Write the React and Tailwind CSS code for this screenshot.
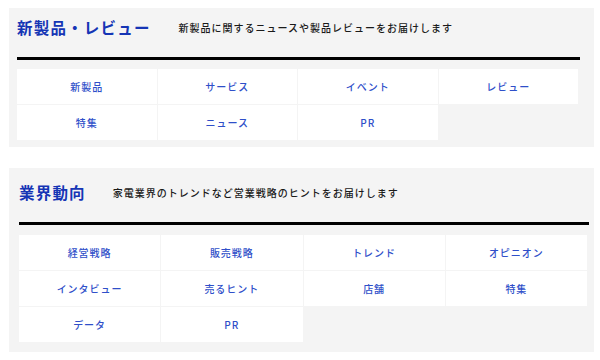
const font = { fontFamily: '"Noto Sans CJK JP", "Noto Sans", sans-serif' };

const sections = [
  {
    title: '新製品・レビュー',
    desc: '新製品に関するニュースや製品レビューをお届けします',
    links: ['新製品', 'サービス', 'イベント', 'レビュー', '特集', 'ニュース', 'PR'],
    pad: 'pl-2 pt-[10px] pb-[7px]',
    lineW: 'w-[563px]',
    gridW: 'w-[561px]',
    lineGap: 'mt-[21px]',
    gridGap: 'mt-[9px]',
    descGap: 'ml-[28px]',
  },
  {
    title: '業界動向',
    desc: '家電業界のトレンドなど営業戦略のヒントをお届けします',
    links: ['経営戦略', '販売戦略', 'トレンド', 'オピニオン', 'インタビュー', '売るヒント', '店舗', '特集', 'データ', 'PR'],
    pad: 'pl-[10px] pt-[15px] pb-[10px]',
    lineW: 'w-[570px]',
    gridW: 'w-[568px]',
    lineGap: 'mt-[21px]',
    gridGap: 'mt-[10px]',
    descGap: 'ml-[27px]',
  },
];

const Section = ({ s }) => (
  <div className={`bg-[#f4f4f4] ${s.pad}`}>
    {/* Header */}
    <div className="flex items-center h-[18px]">
      <h2 className="text-[15.5px] leading-[18px] font-bold tracking-[1.2px] text-[#1535b5]">{s.title}</h2>
      <p className={`${s.descGap} text-[10px] font-medium tracking-[1px] text-[#1a1a1a]`}>{s.desc}</p>
    </div>

    <div className={`${s.lineGap} h-[3px] bg-black ${s.lineW}`} />

    {/* Category links */}
    <div className={`${s.gridGap} grid grid-cols-4 gap-px ${s.gridW}`}>
      {s.links.map((l, i) => (
        <div key={i} className="h-[35px] bg-white flex items-center justify-center text-[10px] font-medium tracking-[1px] text-[#2f4fc9]">
          {l}
        </div>
      ))}
    </div>
  </div>
);

export default function App() {
  return (
    <div className="w-[600px] h-[360px] bg-white pt-2 pl-[9px] overflow-hidden" style={font}>
      <div className="w-[585px] flex flex-col gap-[21px]">
        {sections.map((s, i) => (
          <Section key={i} s={s} />
        ))}
      </div>
    </div>
  );
}
